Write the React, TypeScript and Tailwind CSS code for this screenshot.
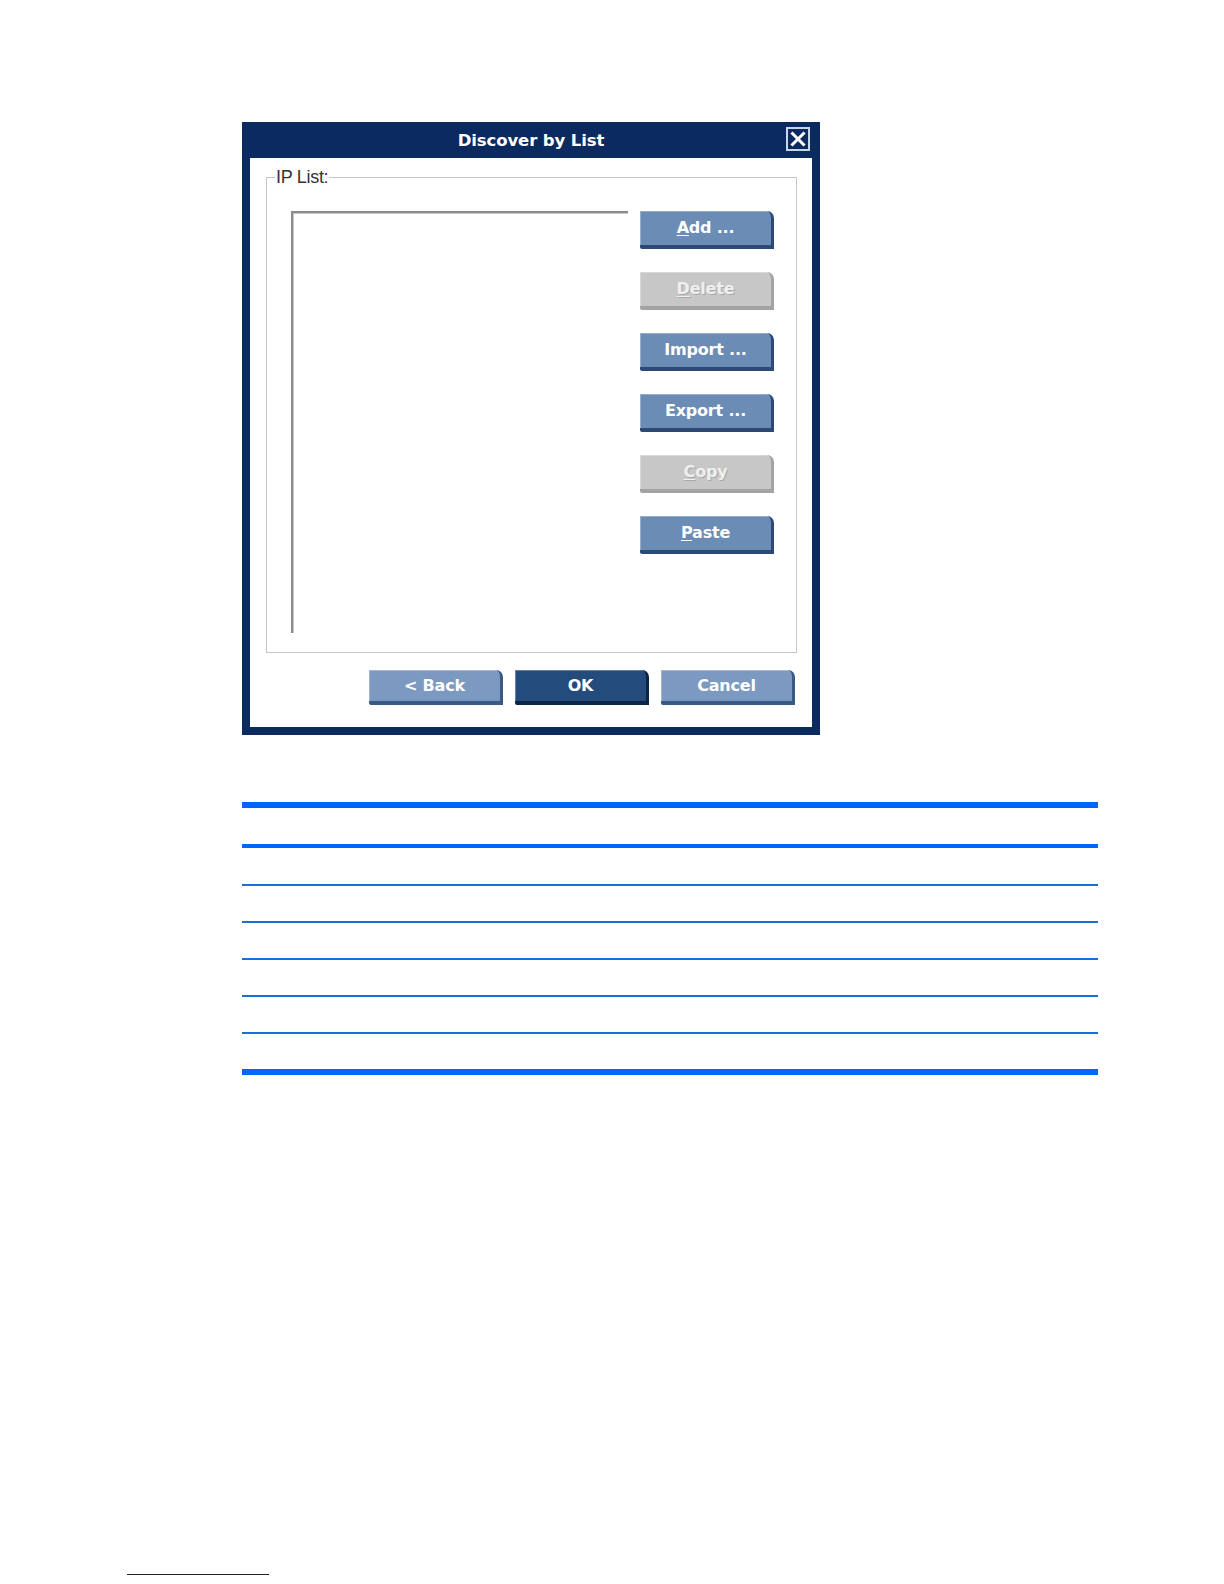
import React from "react";

type Variant = "normal" | "disabled" | "primary" | "light";

const faces: Record<Variant, string> = {
  normal: "bg-[#6a8cb5] border-[#2c4a75] text-white",
  disabled: "bg-[#c7c7c7] border-[#a3a3a3] text-[#efefef] [text-shadow:1px_1px_0_#a9a9a9]",
  primary: "bg-[#234b7b] border-[#0c2447] text-white",
  light: "bg-[#7c9ac1] border-[#3a5a85] text-white",
};

function Btn({
  label,
  u,
  variant = "normal",
  h = "h-[38px]",
}: {
  label: string;
  u?: boolean;
  variant?: Variant;
  h?: string;
}) {
  const first = label.charAt(0);
  const rest = label.slice(1);
  return (
    <div
      className={`w-[134px] ${h} flex items-center justify-center border-r-[3px] border-b-[4px] rounded-tr-[7px] rounded-bl-[2px] shadow-[inset_1px_1px_0_rgba(255,255,255,0.3)] font-bold text-[16px] leading-none tracking-[-0.2px] ${faces[variant]}`}
      style={{ fontFamily: '"DejaVu Sans", Verdana, sans-serif' }}
    >
      <span>
        {u ? <span className="underline underline-offset-2">{first}</span> : first}
        {rest}
      </span>
    </div>
  );
}

export default function App() {
  const rows = [0, 1, 2, 3, 4];
  return (
    <div className="w-[1224px] h-[1584px] bg-white flex flex-col overflow-hidden">
      {/* Dialog */}
      <div className="ml-[242px] mt-[122px] w-[578px] h-[613px] bg-[#0b2a60] flex flex-col px-[8px] pb-[8px]">
        <div className="relative h-[36px] flex items-center justify-center">
          <span
            className="text-white font-bold text-[16.5px] leading-none tracking-[-0.1px] mt-[3px]"
            style={{ fontFamily: '"DejaVu Sans", Verdana, sans-serif' }}
          >
            Discover by List
          </span>
          <div className="absolute right-[2px] top-[5px] w-[24px] h-[24px] border-2 border-[#c9d6ea] flex items-center justify-center">
            <svg width="16" height="16" viewBox="0 0 16 16">
              <path d="M2.5 2.5 L13.5 13.5 M13.5 2.5 L2.5 13.5" stroke="#ffffff" strokeWidth="3" strokeLinecap="square" />
            </svg>
          </div>
        </div>
        <div className="flex-1 bg-white flex flex-col pl-[16px] pr-[17px] pt-[8px]">
          <fieldset className="border border-[#c6c6c6] h-[487px] p-0 m-0 flex flex-col">
            <legend
              className="ml-[8px] px-[1px] text-[18px] leading-[22px] text-[#333333] tracking-[-0.3px]"
              style={{ fontFamily: '"Liberation Sans", Arial, sans-serif' }}
            >
              IP List:
            </legend>
            <div className="flex gap-[12px] pl-[24px] pr-[22px] pt-[23px]">
              <div className="w-[337px] h-[422px] border-t-2 border-l-2 border-[#8c8c8c] bg-white shadow-[inset_1px_1px_0_#c8c8c8]" />
              <div className="flex flex-col gap-[23px]">
                <Btn label="Add ..." u />
                <Btn label="Delete" u variant="disabled" />
                <Btn label="Import ..." />
                <Btn label="Export ..." />
                <Btn label="Copy" u variant="disabled" />
                <Btn label="Paste" u />
              </div>
            </div>
          </fieldset>
          <div className="flex justify-end gap-[12px] mt-[17px]">
            <Btn label="< Back" variant="light" h="h-[35px]" />
            <Btn label="OK" variant="primary" h="h-[35px]" />
            <Btn label="Cancel" variant="light" h="h-[35px]" />
          </div>
        </div>
      </div>

      {/* Table rules */}
      <div className="ml-[242px] mt-[67px] w-[856px] flex flex-col">
        <div className="h-[6px] bg-[#0066ff]" />
        <div className="h-[36px]" />
        <div className="h-[4px] bg-[#0066ff]" />
        <div className="h-[36px]" />
        {rows.map((r) => (
          <React.Fragment key={r}>
            <div className="h-[1.5px] bg-[#1670dc]" />
            <div className="h-[35.5px]" />
          </React.Fragment>
        ))}
        <div className="h-[6px] bg-[#0066ff]" />
      </div>

      {/* Footnote separator */}
      <div className="mt-auto mb-[9px] ml-[127px] w-[142px] h-[1px] bg-[#222222]" />
    </div>
  );
}
